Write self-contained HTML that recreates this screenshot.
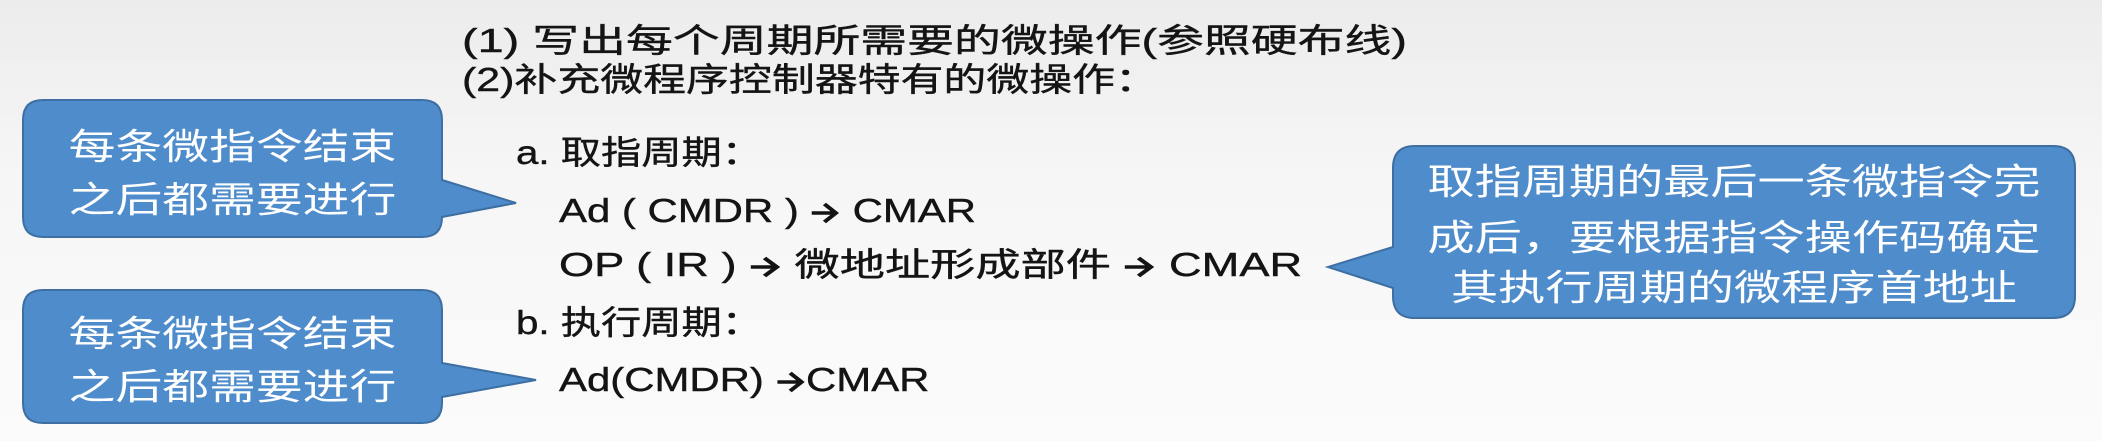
<!DOCTYPE html>
<html><head><meta charset="utf-8"><style>
html,body{margin:0;padding:0}
body{width:2102px;height:441px;position:relative;overflow:hidden;background:linear-gradient(#ececec,#f6f6f6 40%,#fbfbfb);font-family:"Liberation Sans","Noto Sans CJK SC",sans-serif}
.t{position:absolute;white-space:nowrap;height:40px;line-height:40px;font-size:33px;color:#141414;transform-origin:0 50%;-webkit-text-stroke:0.4px #141414}
.b{position:absolute;white-space:nowrap;height:50px;line-height:50px;font-size:36px;color:#fff;transform-origin:50% 50%;text-align:center}
svg.bg{position:absolute;left:0;top:0}
.ar{display:inline-block;width:24px;height:28px;vertical-align:-5px}
</style></head><body>
<svg class="bg" width="2102" height="441">
<path d="M43 100 H422 Q442 100 442 120 V180 L516 203 L442 217 V217 Q442 237 422 237 H43 Q23 237 23 217 V120 Q23 100 43 100Z" fill="#4f8ccb" stroke="#3d6fa3" stroke-width="2"/>
<path d="M43 290 H422 Q442 290 442 310 V363 L536 380 L442 397 V403 Q442 423 422 423 H43 Q23 423 23 403 V310 Q23 290 43 290Z" fill="#4f8ccb" stroke="#3d6fa3" stroke-width="2"/>
<path d="M1415 146 H2053 Q2075 146 2075 168 V296 Q2075 318 2053 318 H1415 Q1393 318 1393 296 V288 L1328 267 L1393 247 V168 Q1393 146 1415 146Z" fill="#4f8ccb" stroke="#3d6fa3" stroke-width="2"/>
</svg>
<div class="t" style="left:462px;top:21px;transform:scaleX(1.42)">(1) 写出每个周期所需要的微操作(参照硬布线)</div>
<div class="t" style="left:462px;top:60px;transform:scaleX(1.3)">(2)补充微程序控制器特有的微操作：</div>
<div class="t" style="left:516px;top:133px;transform:scaleX(1.22)">a. 取指周期：</div>
<div class="t" style="left:559px;top:191px;transform:scaleX(1.27)">Ad ( CMDR ) <svg class="ar" viewBox="0 0 24 28"><path d="M1 14 H19 M11 5 L20 14 L11 23" fill="none" stroke="#141414" stroke-width="3.5"/></svg> CMAR</div>
<div class="t" style="left:559px;top:245px;transform:scaleX(1.37)">OP ( IR ) <svg class="ar" viewBox="0 0 24 28"><path d="M1 14 H19 M11 5 L20 14 L11 23" fill="none" stroke="#141414" stroke-width="3.5"/></svg> 微地址形成部件 <svg class="ar" viewBox="0 0 24 28"><path d="M1 14 H19 M11 5 L20 14 L11 23" fill="none" stroke="#141414" stroke-width="3.5"/></svg> CMAR</div>
<div class="t" style="left:516px;top:303px;transform:scaleX(1.22)">b. 执行周期：</div>
<div class="t" style="left:559px;top:360px;transform:scaleX(1.27)">Ad(CMDR) <svg class="ar" viewBox="0 0 24 28"><path d="M1 14 H19 M11 5 L20 14 L11 23" fill="none" stroke="#141414" stroke-width="3.5"/></svg>CMAR</div>
<div class="b" style="left:23px;width:419px;top:122px;transform:scaleX(1.3)">每条微指令结束</div>
<div class="b" style="left:23px;width:419px;top:175px;transform:scaleX(1.3)">之后都需要进行</div>
<div class="b" style="left:23px;width:419px;top:309px;transform:scaleX(1.3)">每条微指令结束</div>
<div class="b" style="left:23px;width:419px;top:362px;transform:scaleX(1.3)">之后都需要进行</div>
<div class="b" style="left:1393px;width:682px;top:157px;transform:scaleX(1.31)">取指周期的最后一条微指令完</div>
<div class="b" style="left:1393px;width:682px;top:213px;transform:scaleX(1.31)">成后，要根据指令操作码确定</div>
<div class="b" style="left:1393px;width:682px;top:263px;transform:scaleX(1.31)">其执行周期的微程序首地址</div>
</body></html>
